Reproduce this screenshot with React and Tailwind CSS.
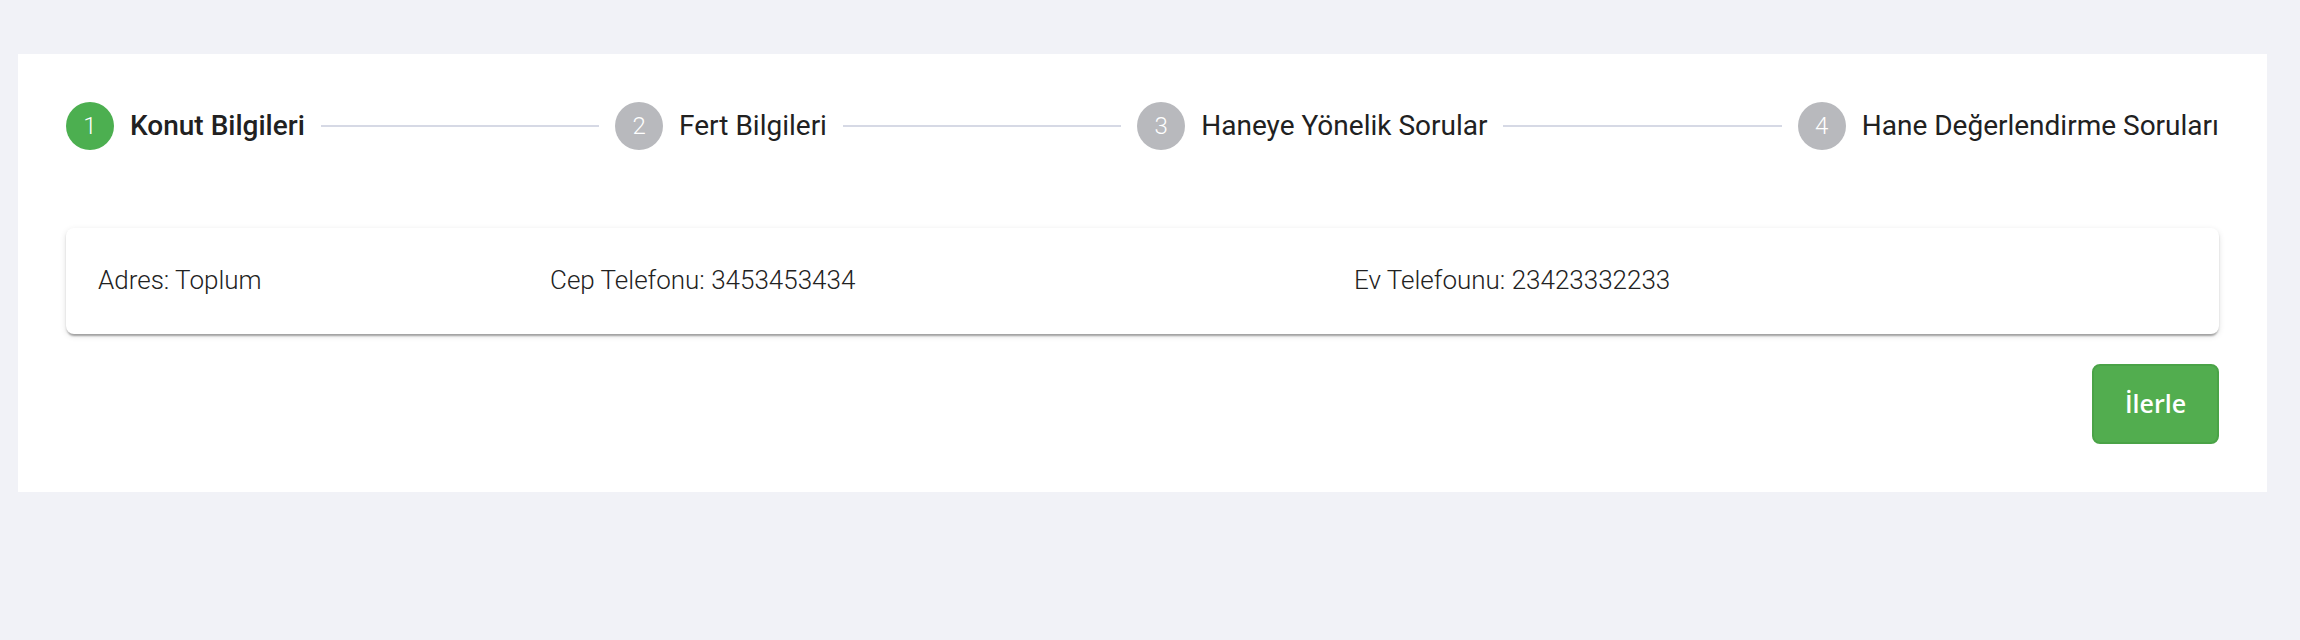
const steps = [
  { n: 1, label: 'Konut Bilgileri', active: true },
  { n: 2, label: 'Fert Bilgileri' },
  { n: 3, label: 'Haneye Yönelik Sorular' },
  { n: 4, label: 'Hane Değerlendirme Soruları' },
];

function Step({ n, label, active }) {
  return (
    <div className="flex items-center gap-4">
      <div
        className={`flex h-12 w-12 items-center justify-center rounded-full text-[24px] font-light text-white ${
          active ? 'bg-[#4caf50]' : 'bg-[#b8b9bd]'
        }`}
      >
        {n}
      </div>
      <span
        className={`whitespace-nowrap text-[28px] leading-none text-[#212121] ${
          active ? 'font-medium' : 'font-normal'
        }`}
      >
        {label}
      </span>
    </div>
  );
}

function Stepper() {
  const items = [];
  steps.forEach((s, i) => {
    items.push(<Step key={`s${s.n}`} {...s} />);
    if (i < steps.length - 1) {
      items.push(<div key={`c${s.n}`} className="mx-4 h-[2px] flex-1 bg-[#d6d9e5]" />);
    }
  });
  return <div className="flex items-center">{items}</div>;
}

export default function App() {
  return (
    <div className="min-h-screen bg-[#f1f2f7] pt-[54px] font-['Roboto',sans-serif]">
      <div className="ml-[18px] w-[2249px] bg-white p-12">
        <Stepper />

        <div className="mt-[78px] rounded-lg bg-white px-8 pt-[31px] pb-[33px] shadow-[0_4px_2px_-2px_rgba(0,0,0,0.2),0_2px_2px_0_rgba(0,0,0,0.14),0_2px_6px_0_rgba(0,0,0,0.12)]">
          <div className="grid grid-cols-[452px_804px_1fr] text-[26px] font-light leading-[42px] text-[#222]">
            <span>Adres: Toplum</span>
            <span>Cep Telefonu: 3453453434</span>
            <span>Ev Telefounu: 23423332233</span>
          </div>
        </div>

        <div className="mt-[30px] flex justify-end">
          <button className="h-[80px] w-[127px] rounded-lg border-2 border-[#4aa347] bg-[#52ad4f] font-['Open_Sans',sans-serif] text-[25px] font-semibold text-white">
            İlerle
          </button>
        </div>
      </div>
    </div>
  );
}
